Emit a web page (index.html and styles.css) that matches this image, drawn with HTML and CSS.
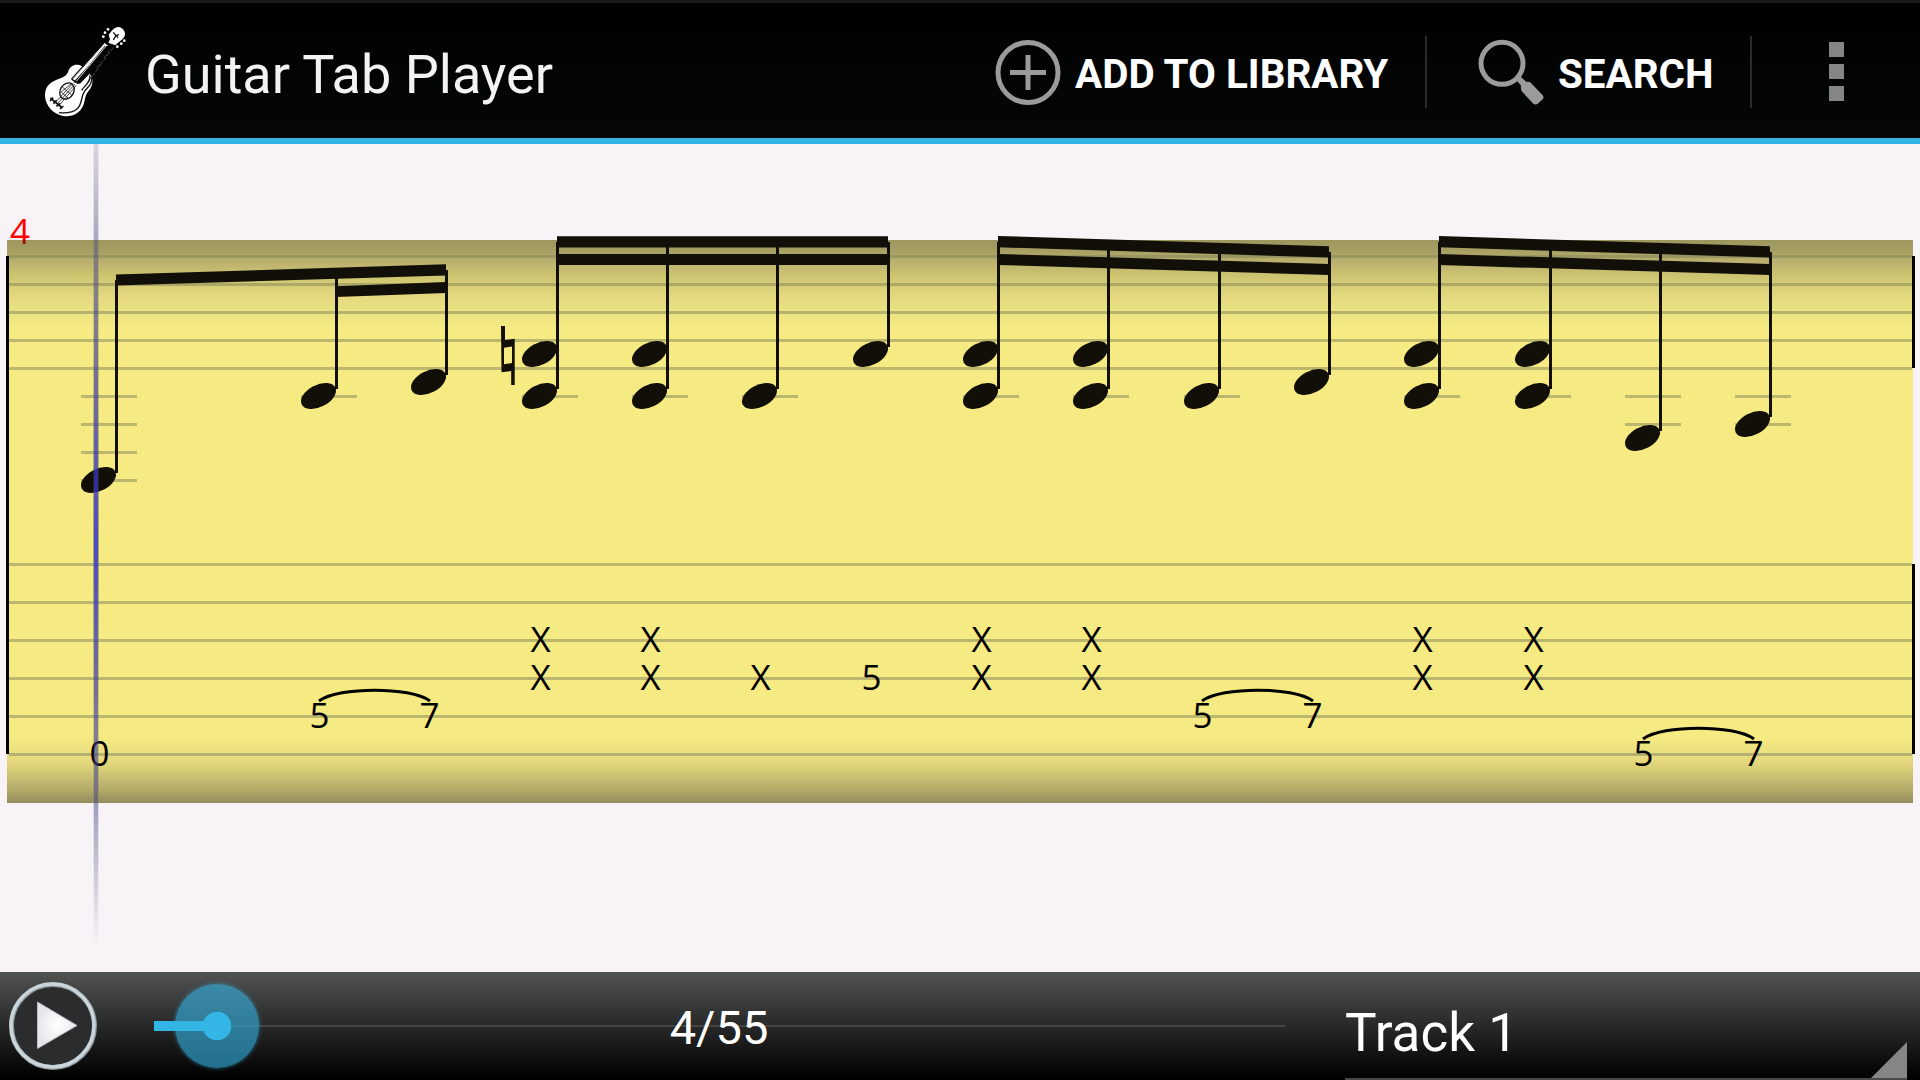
FILE: index.html
```html
<!DOCTYPE html>
<html lang="en">
<head>
  <meta charset="UTF-8" />
  <title>Guitar Tab Player</title>
  <link rel="stylesheet" href="styles.css">
</head>
<body>

  <header class="action-bar">
    <svg class="logo" viewBox="0 0 288 324">
      <path class="white" d="M97 160 C102 143 122 135 137 145 L141 148 L206 75 L221 88 L158 165 C174 178 173 202 157 220 C142 239 150 257 133 277 C117 294 95 300 69 290 C44 281 25 254 27 227 C29 200 48 190 70 182 C86 177 92 172 97 160 Z" />
      <path class="white" d="M218 50 C226 40 235 26 249 27 C263 30 270 45 266 53 C262 65 246 72 238 82 L217 74 L222 64 Z" />
      <path class="black" d="M160 140 L206 84 L232 84 L176 166 L168 160 L132 197 L112 193 Z" />
      <path class="white-line" d="M109 186 L207 77 M119 192 L212 82" />
      <path class="thin" d="M204 120 L221 98 M182 150 L196 131 M168 176 L232 88" />
      <path class="ink" d="M106 184 L202 76 M166 177 C172 198 154 207 145 221 C133 240 140 258 123 273 C109 285 88 286 69 284 M108 184 L127 197 M161 172 C166 192 145 203 137 217" />
      <ellipse class="ink" cx="93" cy="219" rx="20" ry="26" transform="rotate(32 93 219)" />
      <path class="ink-thin" d="M111 196 L60 251 M116 199 L66 255 M121 202 L72 259 M107 196 L73 224 M79 207 L108 232 M76 222 L97 241" />
      <path class="ink-thick" d="M43 240 L79 270 M42 249 L51 239 M52 257 L62 247 M61 265 L73 256 M72 273 L82 264" />
      <path class="ink" d="M232 43 L240 53 L249 50 M240 53 L232 66 M242 54 L246 60" />
      <g class="white">
        <circle cx="216" cy="34" r="4" /><circle cx="207" cy="44" r="4" /><circle cx="202" cy="56" r="4" />
        <circle cx="265" cy="68" r="4" /><circle cx="256" cy="77" r="4" /><circle cx="244" cy="86" r="4" />
      </g>
    </svg>
    <h1 class="title">Guitar Tab Player</h1>

    <div class="action action-add">
      <svg class="action-icon" viewBox="0 0 66 66">
        <circle class="icon-line" cx="33" cy="33.500" r="30" />
        <path class="icon-line" d="M15 33.500 H51 M33 16 V51" />
      </svg>
      <span>ADD TO LIBRARY</span>
    </div>
    <div class="divider"></div>
    <div class="action action-search">
      <svg class="action-icon" viewBox="0 0 66 66">
        <circle class="icon-line" cx="24" cy="24.300" r="21" />
        <path class="icon-fill" d="M38 41 L42.500 37.500 L48.500 43 Q51 42 53 44 L64.500 56 Q66.500 58 64.500 60.500 L60 64.500 Q57.500 66.500 55 64.500 L44 52.500 Q42.500 51 43 46.500 Z" />
      </svg>
      <span>SEARCH</span>
    </div>
    <div class="divider"></div>
    <div class="overflow">
      <i></i><i></i><i></i>
    </div>
  </header>

  <main class="score">
    <svg class="sheet" viewBox="0 144 1920 828">
      <defs>
        <linearGradient id="shadeTop" x1="0" y1="0" x2="0" y2="1">
          <stop offset="0" stop-color="#9d965e" />
          <stop offset=".12" stop-color="#a69f62" />
          <stop offset=".24" stop-color="#bab06f" />
          <stop offset=".42" stop-color="#cec571" />
          <stop offset=".6" stop-color="#ddd57a" />
          <stop offset=".66" stop-color="#e7d881" />
          <stop offset=".76" stop-color="#e5e080" />
          <stop offset=".86" stop-color="#ece482" />
          <stop offset="1" stop-color="#f6ea82" />
        </linearGradient>
        <linearGradient id="shadeBottom" x1="0" y1="0" x2="0" y2="1">
          <stop offset="0" stop-color="#f6ea82" />
          <stop offset=".28" stop-color="#e8de82" />
          <stop offset=".36" stop-color="#e6d87e" />
          <stop offset=".5" stop-color="#d6cd75" />
          <stop offset=".66" stop-color="#c3ba70" />
          <stop offset=".82" stop-color="#afa867" />
          <stop offset="1" stop-color="#968d5e" />
        </linearGradient>
        <linearGradient id="numberFill" gradientUnits="userSpaceOnUse" x1="0" y1="230" x2="0" y2="250">
          <stop offset=".5" stop-color="#ff0000" />
          <stop offset=".5" stop-color="#a50a05" />
        </linearGradient>
        <linearGradient id="cursorFade" x1="0" y1="0" x2="0" y2="1">
          <stop offset="0" stop-color="#666688" stop-opacity=".14" />
          <stop offset=".2" stop-color="#3c3c96" stop-opacity=".5" />
          <stop offset=".5" stop-color="#3030d8" stop-opacity=".76" />
          <stop offset=".8" stop-color="#3c3c96" stop-opacity=".45" />
          <stop offset="1" stop-color="#666677" stop-opacity="0" />
        </linearGradient>
        <linearGradient id="cursorGlow" x1="0" y1="0" x2="0" y2="1">
          <stop offset="0" stop-color="#555566" stop-opacity=".08" />
          <stop offset=".5" stop-color="#444455" stop-opacity=".42" />
          <stop offset="1" stop-color="#555566" stop-opacity="0" />
        </linearGradient>
        <ellipse id="note" rx="18.8" ry="11" transform="rotate(-26.800)" />
        <path id="ledger" d="M-17.500 0 H38.500" />
        <path id="tie" d="M0 12 C 20 -2.500 91 -2.500 111 12" />
      </defs>

      <!-- paper -->
      <rect x="7" y="240" width="1906" height="563" fill="#f6ea82" />
      <rect x="7" y="240" width="1906" height="87" fill="url(#shadeTop)" />
      <rect x="7" y="737" width="1906" height="66" fill="url(#shadeBottom)" />
      <text class="bar-number" x="10" y="244" fill="url(#numberFill)">4</text>

      <!-- staff and tab lines -->
      <path class="line" d="M9 256.500 H1912 M9 284.500 H1912 M9 312.500 H1912 M9 340.500 H1912 M9 368.500 H1912" />
      <path class="line" d="M9 564.500 H1912 M9 602.500 H1912 M9 640.500 H1912 M9 678.500 H1912 M9 716.500 H1912 M9 754.500 H1912" />
      <path class="barline" d="M7.500 256 V754 M1913.500 256 V368 M1913.500 564 V754" />

      <!-- ledger lines -->
      <g class="line">
        <use href="#ledger" x="98.500" y="396.500" /><use href="#ledger" x="98.500" y="424.500" />
        <use href="#ledger" x="98.500" y="452.500" /><use href="#ledger" x="98.500" y="480.500" />
        <use href="#ledger" x="318.500" y="396.500" />
        <use href="#ledger" x="539.500" y="396.500" /><use href="#ledger" x="649.500" y="396.500" /><use href="#ledger" x="759.500" y="396.500" />
        <use href="#ledger" x="980.500" y="396.500" /><use href="#ledger" x="1090.500" y="396.500" /><use href="#ledger" x="1201.500" y="396.500" />
        <use href="#ledger" x="1421.500" y="396.500" /><use href="#ledger" x="1532.500" y="396.500" />
        <use href="#ledger" x="1642.500" y="396.500" /><use href="#ledger" x="1642.500" y="424.500" />
        <use href="#ledger" x="1752.500" y="396.500" /><use href="#ledger" x="1752.500" y="424.500" />
      </g>

      <!-- stems -->
      <path class="stem" d="M116.500 280 V473 M336.500 272 V389 M446.500 270 V375" />
      <path class="stem" d="M557.500 242 V389 M667.500 242 V389 M777.500 242 V389 M888.500 242 V347" />
      <path class="stem" d="M998.500 242 V389 M1108.500 244 V389 M1219.500 248 V389 M1329.500 252 V375" />
      <path class="stem" d="M1439.500 242 V389 M1550.500 244 V389 M1660.500 248 V431 M1770.500 252 V417" />

      <!-- beams -->
      <g class="ink-fill">
        <path d="M116 274.500 L446 264.300 V275.500 L116 285.500 Z M336 286.300 L446 282 V293 L336 297 Z" />
        <path d="M557 236.300 H888 V247.600 H557 Z M557 254 H888 V265 H557 Z" />
        <path d="M998 236 L1329 246.300 V257.500 L998 247.300 Z M998 254 L1329 264 V275 L998 265 Z" />
        <path d="M1439 236 L1770 246.300 V257.500 L1439 247.300 Z M1439 254 L1770 264 V275 L1439 265 Z" />
      </g>

      <!-- natural sign -->
      <path class="ink-fill" fill-rule="evenodd" d="M501 326 H505 V340 L514.700 338.800 V385 H511.200 V371 L501.500 372.300 Z M504 347.800 V364.300 L512 363 V346.500 Z" />

      <!-- note heads -->
      <g class="ink-fill">
        <use href="#note" x="98.500" y="480" /><use href="#note" x="318.500" y="396" /><use href="#note" x="428.500" y="382" />
        <use href="#note" x="539.500" y="354" /><use href="#note" x="539.500" y="396" />
        <use href="#note" x="649.500" y="354" /><use href="#note" x="649.500" y="396" />
        <use href="#note" x="759.500" y="396" /><use href="#note" x="870.500" y="354" />
        <use href="#note" x="980.500" y="354" /><use href="#note" x="980.500" y="396" />
        <use href="#note" x="1090.500" y="354" /><use href="#note" x="1090.500" y="396" />
        <use href="#note" x="1201.500" y="396" /><use href="#note" x="1311.500" y="382" />
        <use href="#note" x="1421.500" y="354" /><use href="#note" x="1421.500" y="396" />
        <use href="#note" x="1532.500" y="354" /><use href="#note" x="1532.500" y="396" />
        <use href="#note" x="1642.500" y="438" /><use href="#note" x="1752.500" y="424" />
      </g>

      <!-- frets -->
      <g class="fret">
        <text x="99.500" y="766">0</text>
        <text x="319.500" y="728">5</text><text x="429.500" y="728">7</text>
        <text x="540.500" y="652">X</text><text x="540.500" y="690">X</text>
        <text x="650.500" y="652">X</text><text x="650.500" y="690">X</text>
        <text x="760.500" y="690">X</text><text x="871.500" y="690">5</text>
        <text x="981.500" y="652">X</text><text x="981.500" y="690">X</text>
        <text x="1091.500" y="652">X</text><text x="1091.500" y="690">X</text>
        <text x="1202.500" y="728">5</text><text x="1312.500" y="728">7</text>
        <text x="1422.500" y="652">X</text><text x="1422.500" y="690">X</text>
        <text x="1533.500" y="652">X</text><text x="1533.500" y="690">X</text>
        <text x="1643.500" y="766">5</text><text x="1753.500" y="766">7</text>
      </g>
      <g class="tie">
        <use href="#tie" x="319" y="689" />
        <use href="#tie" x="1202" y="689" />
        <use href="#tie" x="1643" y="727" />
      </g>

      <!-- play position -->
      <rect x="93" y="144" width="6" height="802" fill="url(#cursorGlow)" />
      <rect x="94" y="144" width="4" height="802" fill="url(#cursorFade)" />
    </svg>
  </main>

  <footer class="player">
    <svg class="play" viewBox="0 0 90 90">
      <defs>
        <radialGradient id="playFill">
          <stop offset="0" stop-color="#ffffff" />
          <stop offset="1" stop-color="#e4e7ea" />
        </radialGradient>
      </defs>
      <circle cx="45" cy="45" r="41.500" fill="#2b2c2d" stroke="#8d9499" stroke-width="5" />
      <circle cx="44.500" cy="44.500" r="41.500" fill="none" stroke="#cbd5dc" stroke-width="3.500" />
      <path d="M29.500 21 L69 44.500 L29.500 67.500 Z" fill="url(#playFill)" stroke="#b9bdc0" stroke-width="1" />
    </svg>
    <div class="seek">
      <div class="seek-done"></div>
      <div class="thumb"></div>
      <span class="position">4/55</span>
    </div>
    <div class="track-select">
      <span>Track 1</span>
      <svg class="corner" viewBox="0 0 36 36"><path d="M36 0 V36 H0 Z" /></svg>
    </div>
  </footer>

</body>
</html>
```
FILE: styles.css
```css
* {
  box-sizing: border-box;
}
body {
  margin: 0;
  width: 1920px;
  height: 1080px;
  display: flex;
  flex-direction: column;
  overflow: hidden;
  background: #f7f3f7;
  font-family: Roboto, "Liberation Sans", sans-serif;
}

/* top bar */
.action-bar {
  height: 144px;
  display: flex;
  align-items: flex-start;
  background: linear-gradient(#000, #050707);
  border-top: 3px solid #1b1b1b;
  border-bottom: 6px solid #33b5e5;
  color: #fff;
}
.logo {
  width: 96px;
  height: 108px;
  margin: 15px 0 0 36px;
}
.white { fill: #fff; }
.black { fill: #050505; }
.white-line { fill: none; stroke: #ddd; stroke-width: 3; }
.thin { fill: none; stroke: #666; stroke-width: 2; stroke-dasharray: 14 5; }
.ink { fill: none; stroke: #111; stroke-width: 4; }
.ink-thin { fill: none; stroke: #222; stroke-width: 2.5; }
.ink-thick { fill: none; stroke: #111; stroke-width: 5; }
.title {
  margin: 36px 0 0 13px;
  width: 843px;
  font-size: 54px;
  line-height: 72px;
  font-weight: 400;
  color: #f3f3f3;
}
.action {
  display: flex;
  align-items: center;
  height: 66px;
  margin-top: 36px;
  font-size: 40.4px;
  line-height: 66px;
  font-weight: 700;
  white-space: nowrap;
}
.action span {
  padding-top: 5px;
}
.action-icon {
  width: 66px;
  height: 66px;
}
.action-add {
  width: 437px;
  padding-left: 7px;
  gap: 14px;
}
.action-search {
  width: 323px;
  padding-left: 51px;
  gap: 14px;
}
.icon-line {
  fill: none;
  stroke: #9b9b9b;
  stroke-width: 5;
}
.icon-fill {
  fill: #9b9b9b;
}
.divider {
  width: 2px;
  height: 72px;
  margin-top: 33px;
  background: #2b2b2b;
}
.overflow {
  display: flex;
  flex-direction: column;
  gap: 7px;
  margin: 39px 0 0 77px;
}
.overflow i {
  width: 15px;
  height: 15px;
  background: #858585;
}

/* score */
.score {
  height: 828px;
}
.sheet {
  display: block;
  width: 1920px;
  height: 828px;
}
.line {
  fill: none;
  stroke: #82845a;
  stroke-opacity: .5;
  stroke-width: 3;
}
.barline {
  stroke: #000;
  stroke-width: 3;
}
.stem {
  stroke: #110f08;
  stroke-width: 3;
}
.ink-fill {
  fill: #110f08;
}
.tie {
  fill: none;
  stroke: #000;
  stroke-width: 3;
}
.fret,
.bar-number {
  font-family: "Open Sans", "Noto Sans", sans-serif;
  font-size: 35px;
}
.fret {
  text-anchor: middle;
}

/* bottom bar */
.player {
  height: 108px;
  display: flex;
  align-items: flex-start;
  background: linear-gradient(#515252, #000 98%);
  color: #fff;
}
.play {
  width: 90px;
  height: 90px;
  margin: 9px 0 0 8px;
}
.seek {
  position: relative;
  display: flex;
  align-items: center;
  width: 1131px;
  height: 108px;
  margin-left: 56px;
  background: linear-gradient(#444, #444) 0 53px / 100% 2px no-repeat;
}
.seek-done {
  width: 63px;
  height: 10px;
  background: #33b5e5;
}
.thumb {
  width: 84px;
  height: 84px;
  margin-left: -42px;
  border-radius: 50%;
  background: radial-gradient(circle, #33b5e5 14px, rgba(51, 181, 229, .6) 14.5px);
  box-shadow: 0 0 4px rgba(51, 181, 229, .6);
}
.position {
  position: absolute;
  left: 0;
  width: 100%;
  padding: 4px 1px 0 0;
  text-align: center;
  font-size: 47px;
  line-height: 56px;
}
.track-select {
  display: flex;
  justify-content: space-between;
  align-items: flex-end;
  width: 562px;
  height: 108px;
  margin-left: 60px;
  border-bottom: 2px solid #484848;
  font-size: 53px;
  line-height: 90px;
}
.corner {
  width: 36px;
  height: 36px;
  fill: #858585;
}
```
